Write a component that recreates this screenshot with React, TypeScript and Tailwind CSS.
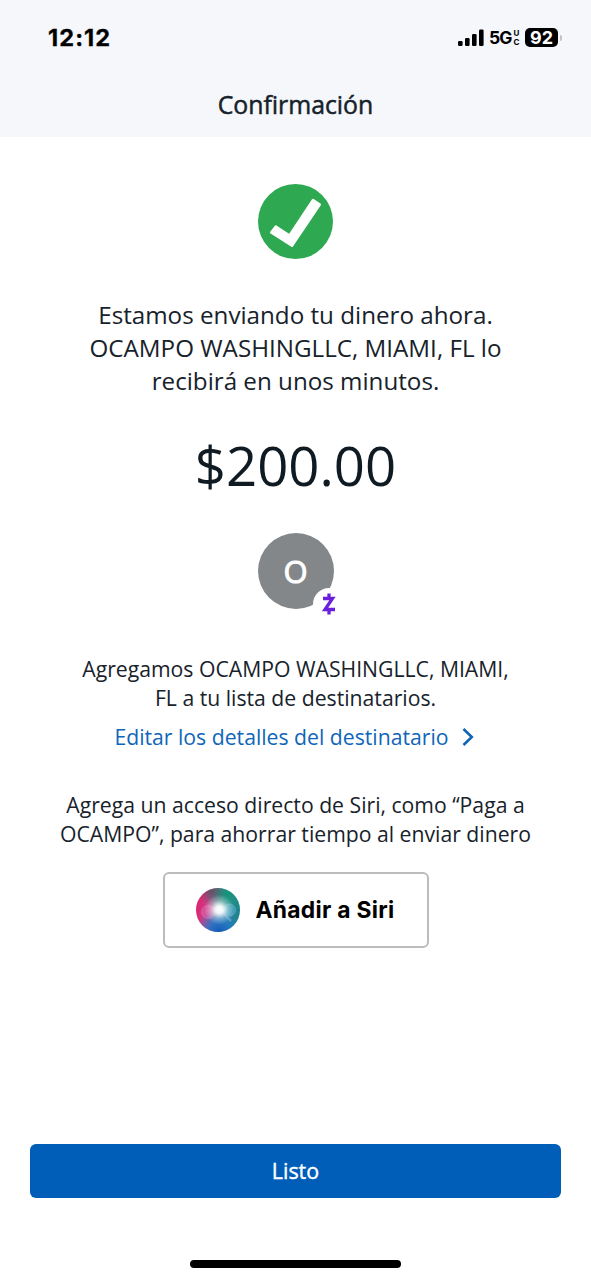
function StatusBar() {
  return (
    <div className="flex h-[75px] items-center justify-between pl-[48px] pr-[29px] text-black">
      <span className="pt-[1px] font-['Inter',sans-serif] text-[23.5px] font-bold leading-none tracking-[1.1px] [-webkit-text-stroke:0.3px_currentColor]">
        12:12
      </span>
      <div className="flex items-center font-['Inter',sans-serif] font-bold leading-none">
        <svg width="26" height="18" viewBox="0 0 26 18" fill="currentColor">
          <rect x="0" y="12" width="4.6" height="5" rx="1.2" />
          <rect x="7" y="9" width="4.6" height="8" rx="1.2" />
          <rect x="14" y="5" width="4.6" height="12" rx="1.2" />
          <rect x="21" y="0.5" width="4.6" height="16.5" rx="1.2" />
        </svg>
        <span className="ml-[5px] w-[24px] pt-[1px] text-[17.5px] tracking-[-1px]">
          5G
        </span>
        <span className="flex w-[7px] flex-col items-center text-[8px] leading-[9px]">
          <span>U</span>
          <span>C</span>
        </span>
        <span className="ml-[5px] flex h-[19px] w-[33px] items-center justify-center rounded-[5px] bg-black text-[18px] text-white">
          92
        </span>
        <span className="ml-[2px] h-[6px] w-[2px] rounded-r-full bg-[#c3c4c8]" />
      </div>
    </div>
  );
}

function CheckIcon() {
  return (
    <svg width="75" height="75" viewBox="0 0 75 75">
      <circle cx="37.5" cy="37.5" r="37.5" fill="#2ea952" />
      <path
        d="M13.2 48.5 L17.8 42.5 L31.5 51.5 L55 16 L61.8 20.5 L34 61.8 Z"
        fill="#fff"
        stroke="#fff"
        strokeWidth="2.4"
        strokeLinejoin="round"
      />
    </svg>
  );
}

function ZelleBadge() {
  return (
    <span className="absolute left-[55px] top-[55px] flex size-[32px] items-center justify-center rounded-full bg-white">
      <svg width="14" height="22" viewBox="0 0 14 22" fill="none" stroke="#6a1fdb">
        <path d="M1 5.5 H10.5 L3 16.5 H13" strokeWidth="3.3" />
        <path d="M7 0.5 V5 M7 17 V21.5" strokeWidth="3.3" />
      </svg>
    </span>
  );
}

function SiriOrb() {
  return (
    <svg width="44" height="44" viewBox="0 0 44 44">
      <defs>
        <linearGradient id="base" x1="0" y1="0.4" x2="1" y2="0.6">
          <stop offset="0" stopColor="#e02070" />
          <stop offset="0.3" stopColor="#c54a8e" />
          <stop offset="0.6" stopColor="#3a8fa0" />
          <stop offset="1" stopColor="#1a828c" />
        </linearGradient>
        <radialGradient id="green" cx="0.7" cy="0.12" r="0.5">
          <stop offset="0" stopColor="#169378" />
          <stop offset="1" stopColor="#169378" stopOpacity="0" />
        </radialGradient>
        <radialGradient id="blue" cx="0.52" cy="1" r="0.52">
          <stop offset="0" stopColor="#1456b8" />
          <stop offset="0.5" stopColor="#2474c8" stopOpacity="0.8" />
          <stop offset="1" stopColor="#2474c8" stopOpacity="0" />
        </radialGradient>
        <radialGradient id="shade" cx="0.34" cy="0.06" r="0.32">
          <stop offset="0" stopColor="#4c4a5a" stopOpacity="0.7" />
          <stop offset="1" stopColor="#4c4a5a" stopOpacity="0" />
        </radialGradient>
        <radialGradient id="glow" cx="0.53" cy="0.49" r="0.34">
          <stop offset="0" stopColor="#fff" />
          <stop offset="0.25" stopColor="#fff" stopOpacity="0.92" />
          <stop offset="0.6" stopColor="#fff" stopOpacity="0.35" />
          <stop offset="1" stopColor="#fff" stopOpacity="0" />
        </radialGradient>
      </defs>
      <circle cx="22" cy="22" r="22" fill="url(#base)" />
      <circle cx="22" cy="22" r="22" fill="url(#green)" />
      <circle cx="22" cy="22" r="22" fill="url(#blue)" />
      <circle cx="22" cy="22" r="22" fill="url(#shade)" />
      <circle cx="12" cy="24" r="6.5" fill="#e77bc0" stroke="#f3a3d4" opacity="0.35" />
      <circle cx="33.5" cy="22" r="6" fill="#63b8ee" stroke="#8fd6f0" opacity="0.4" />
      <path d="M23 22 L36 32 L34 34 Z" fill="#b5e0f5" opacity="0.3" />
      <circle cx="22" cy="22" r="22" fill="url(#glow)" />
    </svg>
  );
}

export default function App() {
  return (
    <div className="flex h-[1280px] w-[591px] flex-col bg-white font-['Open_Sans','Noto_Sans',sans-serif] text-[#17222b]">
      <header className="h-[137px] bg-[#f5f7fb]">
        <StatusBar />
        <h1 className="pt-[12px] text-center text-[24.8px] leading-[34px] [-webkit-text-stroke:0.5px_currentColor]">
          Confirmación
        </h1>
      </header>

      <main className="flex flex-1 flex-col items-center pt-[47px] text-center">
        <CheckIcon />

        <p className="mt-[39px] text-[24.2px] leading-[33px]">
          Estamos enviando tu dinero ahora.
          <br />
          OCAMPO WASHINGLLC, MIAMI, FL lo
          <br />
          recibirá en unos minutos.
        </p>

        <p className="mt-[33px] text-[54.5px] leading-[70px] text-[#0f1a22]">
          $200.00
        </p>

        <div className="relative mt-[33px] flex size-[76px] items-center justify-center rounded-full bg-[#84878a]">
          <span className="text-[31px] leading-none text-white [-webkit-text-stroke:1px_currentColor]">
            O
          </span>
          <ZelleBadge />
        </div>

        <p className="mt-[45px] text-[21.2px] leading-[29px]">
          Agregamos OCAMPO WASHINGLLC, MIAMI,
          <br />
          FL a tu lista de destinatarios.
        </p>

        <a
          href="#"
          className="mt-[10px] flex items-center gap-[13px] pr-[3px] text-[21.2px] leading-[30px] text-[#0f66b8]"
        >
          Editar los detalles del destinatario
          <svg width="12" height="18" viewBox="0 0 12 18" fill="none">
            <path d="M1.5 1 L9.8 9 L1.5 17" stroke="currentColor" strokeWidth="2.6" />
          </svg>
        </a>

        <p className="mt-[38px] text-[21.2px] leading-[29px]">
          Agrega un acceso directo de Siri, como “Paga a
          <br />
          OCAMPO”, para ahorrar tiempo al enviar dinero
        </p>

        <button className="mt-[24px] flex h-[76px] w-[266px] items-center rounded-[6px] border-2 border-[#bcbcbc] pl-[31px] font-['Inter',sans-serif] text-[22.8px] font-bold tracking-[0.3px] text-black">
          <SiriOrb />
          <span className="ml-[16px] whitespace-nowrap pt-[1px]">Añadir a Siri</span>
        </button>
      </main>

      <footer className="flex h-[136px] flex-col items-center px-[30px]">
        <button className="h-[54px] w-full rounded-[6px] bg-[#005eb8] pt-[1px] text-[21.4px] text-white [-webkit-text-stroke:0.4px_currentColor]">
          Listo
        </button>
        <div className="mt-[62px] h-[8px] w-[211px] rounded-full bg-black" />
      </footer>
    </div>
  );
}
